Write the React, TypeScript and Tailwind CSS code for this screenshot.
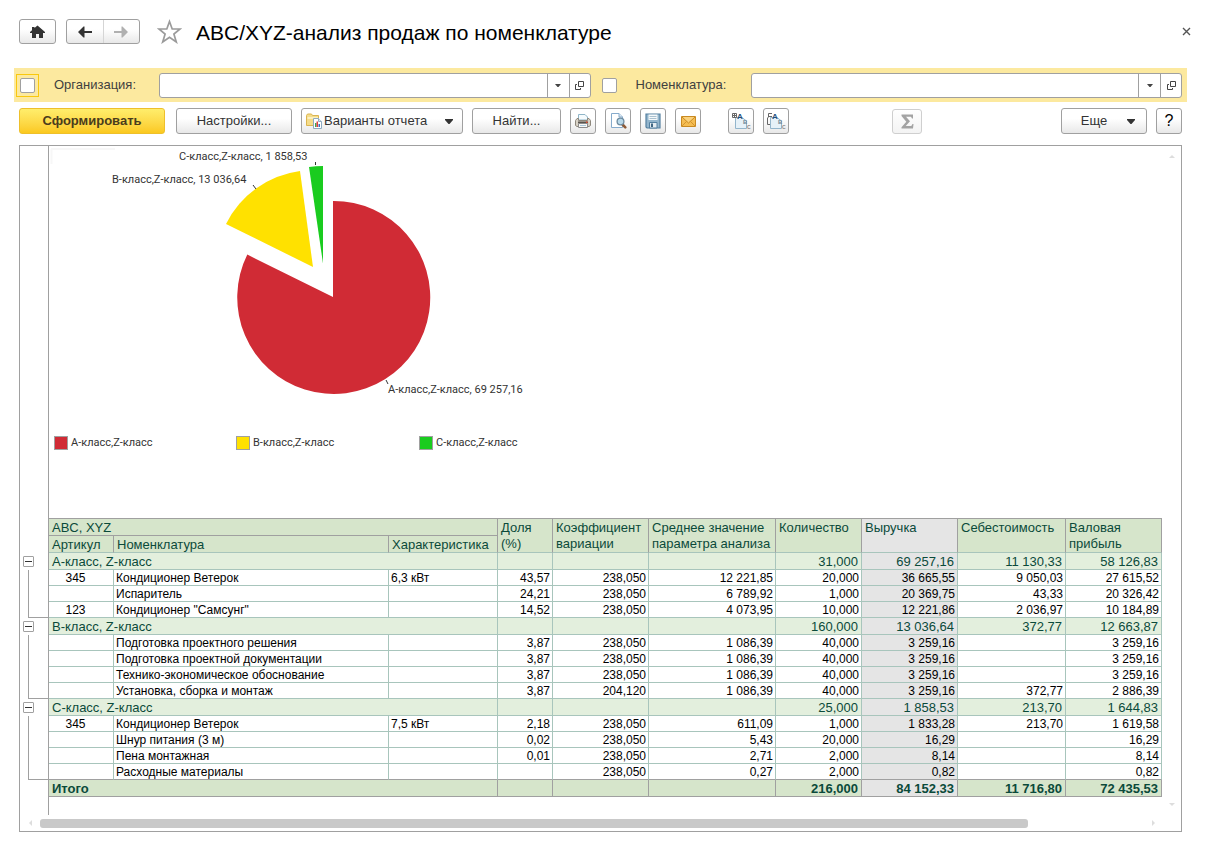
import React, { useState } from 'react';

interface ReportRow {
  article: string;
  name: string;
  feature: string;
  values: string[];
}

interface ReportGroup {
  title: string;
  totals: string[];
  rows: ReportRow[];
}

// values: share, variation, average, quantity, revenue, cost, profit
const GROUPS: ReportGroup[] = [
  {
    title: 'А-класс, Z-класс',
    totals: ['', '', '', '31,000', '69 257,16', '11 130,33', '58 126,83'],
    rows: [
      { article: '345', name: 'Кондиционер Ветерок', feature: '6,3 кВт', values: ['43,57', '238,050', '12 221,85', '20,000', '36 665,55', '9 050,03', '27 615,52'] },
      { article: '', name: 'Испаритель', feature: '', values: ['24,21', '238,050', '6 789,92', '1,000', '20 369,75', '43,33', '20 326,42'] },
      { article: '123', name: 'Кондиционер "Самсунг"', feature: '', values: ['14,52', '238,050', '4 073,95', '10,000', '12 221,86', '2 036,97', '10 184,89'] },
    ],
  },
  {
    title: 'В-класс, Z-класс',
    totals: ['', '', '', '160,000', '13 036,64', '372,77', '12 663,87'],
    rows: [
      { article: '', name: 'Подготовка проектного решения', feature: '', values: ['3,87', '238,050', '1 086,39', '40,000', '3 259,16', '', '3 259,16'] },
      { article: '', name: 'Подготовка проектной документации', feature: '', values: ['3,87', '238,050', '1 086,39', '40,000', '3 259,16', '', '3 259,16'] },
      { article: '', name: 'Технико-экономическое обоснование', feature: '', values: ['3,87', '238,050', '1 086,39', '40,000', '3 259,16', '', '3 259,16'] },
      { article: '', name: 'Установка, сборка и монтаж', feature: '', values: ['3,87', '204,120', '1 086,39', '40,000', '3 259,16', '372,77', '2 886,39'] },
    ],
  },
  {
    title: 'С-класс, Z-класс',
    totals: ['', '', '', '25,000', '1 858,53', '213,70', '1 644,83'],
    rows: [
      { article: '345', name: 'Кондиционер Ветерок', feature: '7,5 кВт', values: ['2,18', '238,050', '611,09', '1,000', '1 833,28', '213,70', '1 619,58'] },
      { article: '', name: 'Шнур питания (3 м)', feature: '', values: ['0,02', '238,050', '5,43', '20,000', '16,29', '', '16,29'] },
      { article: '', name: 'Пена монтажная', feature: '', values: ['0,01', '238,050', '2,71', '2,000', '8,14', '', '8,14'] },
      { article: '', name: 'Расходные материалы', feature: '', values: ['', '238,050', '0,27', '2,000', '0,82', '', '0,82'] },
    ],
  },
];

const GRAND_TOTAL = ['', '', '', '216,000', '84 152,33', '11 716,80', '72 435,53'];
const VALUE_HEADERS = ['Доля (%)', 'Коэффициент вариации', 'Среднее значение параметра анализа', 'Количество', 'Выручка', 'Себестоимость', 'Валовая прибыль'];
const REVENUE = 4;

const FACE = 'flex items-center rounded-[3px] border border-[#a0a0a0] bg-linear-to-b from-white from-40% to-[#e8e8e8] text-[#333333]';
const BTN = `${FACE} justify-center h-[26px]`;

const CaretDown: React.FC = () => (
  <svg width="8" height="5" viewBox="0 0 8 5" aria-hidden="true">
    <path d="M0 0h8v1L4.5 5h-1L0 1z" fill="#333333" />
  </svg>
);

const HomeIcon: React.FC = () => (
  <svg width="15" height="13" viewBox="0 0 15 13" aria-hidden="true">
    <path d="M7.5 0.5L15 7V8H13V13H9V9H6V13H2V8H0V7L2 5.3V2H4.5V3z" fill="#333333" />
  </svg>
);

const ArrowIcon: React.FC<{ right?: boolean; color: string }> = ({ right, color }) => (
  <svg width="14" height="12" viewBox="0 0 14 12" aria-hidden="true">
    <path
      d={right ? 'M14 6L8.5 11.5H7.5V7H0V5H7.5V0.5H8.5z' : 'M0 6L5.5 0.5H6.5V5H14V7H6.5V11.5H5.5z'}
      fill={color}
    />
  </svg>
);

const StarIcon: React.FC = () => (
  <svg width="25" height="25" viewBox="0 0 25 25" aria-hidden="true">
    <path
      d="M12.5 2.5L15.2 10H23L16.9 15L19.3 23L12.5 18.3L5.7 23L8.1 15L2 10H9.8z"
      fill="white"
      stroke="#9b9b9b"
      strokeWidth="1.7"
    />
  </svg>
);

const FolderReportIcon: React.FC = () => (
  <svg width="16" height="16" viewBox="0 0 16 16" aria-hidden="true">
    <path d="M0.5 2.5L1.5 1H5.5L6.5 2.5H12.5V12.5H0.5z" fill="#f5dc8a" stroke="#dbb550" />
    <path d="M1.5 4H12V6H1.5z" fill="#fcf0c0" />
    <path d="M7.5 5.5H12.5L15.5 8.5V15.5H7.5z" fill="white" stroke="#8fabc0" />
    <path d="M12.5 5.5V8.5H15.5" fill="#dce8f0" stroke="#8fabc0" />
    <path d="M9 10H10.5V14H9z" fill="#3aa655" />
    <path d="M10.5 8.5H12V14H10.5z" fill="#e04040" />
    <path d="M12.5 11H14V14H12.5z" fill="#3b6fc4" />
  </svg>
);

const PrinterIcon: React.FC = () => (
  <svg width="16" height="16" viewBox="0 0 16 16" aria-hidden="true">
    <path d="M3.5 1.5H10L12.5 4V7H3.5z" fill="#f6fbfd" stroke="#8fb5c8" />
    <path d="M0.5 7.5L2 5.5H3.5V7.5H12.5V5.5H14L15.5 7.5V12.5L14 13.5H2L0.5 12.5z" fill="#d8d2c6" stroke="#8d877c" />
    <path d="M3 8.5H13V10.5H3z" fill="#5a554e" />
    <path d="M11 8.5H12.5V10H11z" fill="#e2482d" />
    <path d="M3.5 10.5H12.5V14.5H3.5z" fill="#f8f8f6" stroke="#8c8c8c" />
    <path d="M5 12.5H11" stroke="#a9c6da" />
  </svg>
);

const PreviewIcon: React.FC = () => (
  <svg width="17" height="16" viewBox="0 0 17 16" aria-hidden="true">
    <path d="M1.5 0.5H9L12.5 4V14.5H1.5z" fill="white" stroke="#86abcc" />
    <path d="M9 0.5V4H12.5" fill="#dfeaf3" stroke="#86abcc" />
    <path d="M12.5 11.5L15.3 14.3" stroke="#8e5a36" strokeWidth="2.6" strokeLinecap="round" />
    <circle cx="10.5" cy="8.5" r="3.4" fill="#b9d9ea" stroke="#6d8ba0" strokeWidth="1.3" />
  </svg>
);

const DiskIcon: React.FC = () => (
  <svg width="16" height="16" viewBox="0 0 16 16" aria-hidden="true">
    <path d="M1 1H15V15H2L1 14z" fill="#93b5cc" stroke="#5580a0" strokeWidth="1.2" />
    <path d="M3.5 1.5H12.5V7H3.5z" fill="#f4f8fa" />
    <path d="M4.5 3.5H11.5M4.5 5.5H11.5" stroke="#a9c0cf" />
    <path d="M4.5 9.5H12V15H4.5z" fill="#e4ecf1" stroke="#5580a0" />
    <path d="M6 10.5H8V14H6z" fill="#3f6683" />
  </svg>
);

const MailIcon: React.FC = () => (
  <svg width="15" height="11" viewBox="0 0 15 11" aria-hidden="true">
    <path d="M0.5 0.5H14.5V10.5H0.5z" fill="#f5bd52" stroke="#c98a22" />
    <path d="M1 10L5.5 5.5M14 10L9.5 5.5" stroke="#d39530" fill="none" />
    <path d="M1 1L7.5 7L14 1" fill="#fbd27c" stroke="#c98a22" />
  </svg>
);

// Sheet with a group marker, used for expanding and collapsing all groups
const GroupsIcon: React.FC<{ collapse?: boolean }> = ({ collapse }) => (
  <svg width="19" height="18" viewBox="0 0 19 18" aria-hidden="true">
    <path d="M3.5 5.5H10L14.5 9V16.5H3.5z" fill="#e6f1f8" stroke="#93b5cc" />
    {collapse ? (
      <path d="M5 1.5H1.5V5.5M1.5 4.5H5M0.5 5.5V12.5H3" fill="none" stroke="#666666" />
    ) : (
      <path d="M0.5 1.5H4.5V5.5H0.5zM2.5 1.5V6M0 3.5H4.5" fill="none" stroke="#666666" />
    )}
    <text x="5" y="7" fontSize="8" fontWeight="bold" fill="#1f4f7a" fontFamily="Liberation Sans, sans-serif">A</text>
    <text x="11" y="12" fontSize="6" fontWeight="bold" fill="#6f8797" fontFamily="Liberation Sans, sans-serif">B</text>
    <text x="15" y="17" fontSize="5" fontWeight="bold" fill="#888888" fontFamily="Liberation Sans, sans-serif">C</text>
  </svg>
);

const SigmaIcon: React.FC = () => (
  <svg width="13" height="15" viewBox="0 0 13 15" aria-hidden="true">
    <path d="M0.5 0.5H12V4.5H11L10 2.8H5L9 7.2L4.7 12H10.3L11.5 10H12.5L12 14.5H0.5V13.2L5.3 7.8L0.5 2z" fill="#a3a3a3" />
  </svg>
);

const OpenIcon: React.FC = () => (
  <svg width="9" height="9" viewBox="0 0 9 9" aria-hidden="true">
    <path d="M3.5 0.5H8.5V5.5H3.5zM2 3.5H0.5V8.5H5.5V7" fill="none" stroke="#444444" />
  </svg>
);

const FilterField: React.FC<{ id: string; label: string }> = ({ id, label }) => (
  <div className="flex flex-1 h-[25px] rounded-[3px] border border-[#a0a0a0] bg-white overflow-hidden">
    <input id={id} type="text" aria-label={label} className="flex-1 min-w-0 px-2 outline-none" />
    <button type="button" aria-label="Выбрать из списка" className="w-[22px] border-l border-[#a0a0a0] flex items-center justify-center">
      <svg width="6" height="3" viewBox="0 0 6 3" aria-hidden="true">
        <path d="M0 0H6L3.5 3H2.5z" fill="#444444" />
      </svg>
    </button>
    <button type="button" aria-label="Открыть" className="w-[21px] border-l border-[#a0a0a0] flex items-center justify-center">
      <OpenIcon />
    </button>
  </div>
);

const PieChart: React.FC = () => (
  <svg width="500" height="280" viewBox="0 0 500 280" className="block" role="img" aria-label="Выручка по классам">
    <path d="M2 3H66M2.5 3V18" stroke="#f7f7f7" strokeWidth="2" fill="none" />
    <path d="M284 151V55A96.5 96.5 0 1 1 198.3 108.6z" fill="#d02b35" />
    <path d="M264 121L177 78A97 97 0 0 1 251 25z" fill="#ffe100" />
    <path d="M274 117.5L260 21A97 97 0 0 1 274 20z" fill="#1acc1f" />
    <path d="M266.5 16V19M204 39L207 43M337 234L339 238" stroke="#333333" fill="none" />
    <g fontSize="11" fill="#333333" fontFamily="Roboto, sans-serif">
      <text x="130" y="14">С-класс,Z-класс, 1 858,53</text>
      <text x="63" y="37">В-класс,Z-класс, 13 036,64</text>
      <text x="339" y="247">А-класс,Z-класс, 69 257,16</text>
    </g>
  </svg>
);

const App: React.FC = () => {
  const [useOrg, setUseOrg] = useState(false);
  const [useItem, setUseItem] = useState(false);

  const valueCells = (values: string[], cls: string) =>
    values.map((v, i) => (
      <td key={i} className={`border-r border-b pt-[2px] text-right whitespace-nowrap ${cls} ${i === REVENUE ? 'bg-[#e5e5e5]' : ''}`}>
        {v}
      </td>
    ));

  return (
    <div className="min-h-screen bg-white font-['Liberation_Sans',Arial,sans-serif] text-[13px] text-[#404040] pl-[14px] pr-[21px] pt-[19px] pb-[14px]">
      {/* Title bar */}
      <header className="flex items-center h-[25px] pl-[5px] mb-6">
        <button type="button" aria-label="Главная" className={`${FACE} justify-center w-[37px] h-[25px]`}>
          <HomeIcon />
        </button>
        <div className={`${FACE} ml-[10px] w-[74px] h-[25px]`}>
          <button type="button" aria-label="Назад" className="flex-1 h-full flex items-center justify-center">
            <ArrowIcon color="#333333" />
          </button>
          <button type="button" aria-label="Вперед" className="flex-1 h-full flex items-center justify-center border-l border-[#d5d5d5]">
            <ArrowIcon right color="#b0b0b0" />
          </button>
        </div>
        <button type="button" aria-label="Добавить в избранное" className="ml-[17px]">
          <StarIcon />
        </button>
        <h1 className="ml-[14px] pt-[2px] text-[21px] leading-6 text-black whitespace-nowrap">ABC/XYZ-анализ продаж по номенклатуре</h1>
        <button type="button" aria-label="Закрыть" className="ml-auto -mr-1">
          <svg width="9" height="9" viewBox="0 0 9 9" aria-hidden="true">
            <path d="M1 1L8 8M8 1L1 8" stroke="#555555" strokeWidth="1.4" />
          </svg>
        </button>
      </header>

      {/* Filters */}
      <div className="flex items-center h-[34px] bg-[#fce99f] pl-[2px] pr-[5px]">
        <span className="flex items-center justify-center size-[23px] border border-[#f9c80e]">
          <input
            id="use-org"
            type="checkbox"
            checked={useOrg}
            onChange={(e) => setUseOrg(e.target.checked)}
            className="appearance-none size-[15px] rounded-[2px] border border-[#a0a0a0] bg-white checked:bg-[#a0a0a0]"
          />
        </span>
        <label htmlFor="use-org" className="ml-[15px] w-[105px]">Организация:</label>
        <FilterField id="org" label="Организация" />
        <input
          id="use-item"
          type="checkbox"
          checked={useItem}
          onChange={(e) => setUseItem(e.target.checked)}
          className="appearance-none ml-[11px] size-[15px] rounded-[2px] border border-[#a0a0a0] bg-white checked:bg-[#a0a0a0]"
        />
        <label htmlFor="use-item" className="ml-[19px] w-[115px]">Номенклатура:</label>
        <FilterField id="item" label="Номенклатура" />
      </div>

      {/* Toolbar */}
      <div className="flex items-center gap-[9px] mt-[6px] mb-[11px] px-[5px]">
        <button
          type="button"
          className="h-[26px] w-[146px] mr-[2px] rounded-[3px] border border-[#eec02b] bg-linear-to-b from-[#ffee6b] to-[#fbc91d] font-bold text-[#4a3c1c]"
        >
          Сформировать
        </button>
        <button type="button" className={`${BTN} w-[116px]`}>Настройки...</button>
        <button type="button" className={`${BTN} w-[162px] pl-1 pr-[9px] gap-[2px]`}>
          <FolderReportIcon />
          <span className="mr-auto whitespace-nowrap">Варианты отчета</span>
          <CaretDown />
        </button>
        <button type="button" className={`${BTN} w-[89px]`}>Найти...</button>
        <button type="button" aria-label="Печать" className={`${BTN} w-[26px]`}><PrinterIcon /></button>
        <button type="button" aria-label="Предварительный просмотр" className={`${BTN} w-[26px]`}><PreviewIcon /></button>
        <button type="button" aria-label="Сохранить" className={`${BTN} w-[26px]`}><DiskIcon /></button>
        <button type="button" aria-label="Отправить" className={`${BTN} w-[26px]`}><MailIcon /></button>
        <button type="button" aria-label="Развернуть группы" className={`${BTN} w-[26px] ml-[18px]`}><GroupsIcon /></button>
        <button type="button" aria-label="Свернуть группы" className={`${BTN} w-[26px]`}><GroupsIcon collapse /></button>
        <button
          type="button"
          disabled
          aria-label="Сумма"
          className="flex items-center justify-center w-[30px] h-[25px] ml-[94px] rounded-[3px] border border-[#cfcfcf] bg-linear-to-b from-white to-[#f3f3f3]"
        >
          <SigmaIcon />
        </button>
        <button type="button" className={`${BTN} w-[86px] ml-auto gap-5 pl-2`}>
          Еще
          <CaretDown />
        </button>
        <button type="button" aria-label="Справка" className={`${BTN} w-[26px] text-base text-black`}>?</button>
      </div>

      {/* Report */}
      <main className="mx-[5px] border border-[#a0a0a0]">
        <div className="flex">
          {/* Group outline */}
          <div className="w-7 shrink-0 pt-[407px]">
            {GROUPS.map((group) => (
              <div key={group.title}>
                <div className="flex items-center h-[17px] pl-[3px]">
                  <button type="button" aria-label={`Свернуть ${group.title}`} className="flex items-center justify-center size-[11px] rounded-[1px] border border-[#a0a0a0]">
                    <span className="w-[7px] h-px bg-[#333333]" />
                  </button>
                </div>
                <div className="ml-2 border-l border-b border-[#a0a0a0]">
                  {group.rows.map((row) => (
                    <div key={row.name} className="h-4 last:h-[15px]" />
                  ))}
                </div>
              </div>
            ))}
          </div>

          <div className="flex-1 min-w-0 border-l border-[#a0a0a0] pb-[18px]">
            <PieChart />
            <ul className="flex pt-[10px] pb-[68px] pl-[5px] font-[Roboto,sans-serif] text-[11px] leading-[14px] text-[#333333]">
              <li className="flex items-center gap-[3px] w-[182px]">
                <span className="size-[14px] border border-[#a0a0a0] bg-[#d02b35]" />А-класс,Z-класс
              </li>
              <li className="flex items-center gap-[3px] w-[183px]">
                <span className="size-[14px] border border-[#a0a0a0] bg-[#ffe100]" />В-класс,Z-класс
              </li>
              <li className="flex items-center gap-[3px]">
                <span className="size-[14px] border border-[#a0a0a0] bg-[#1acc1f]" />С-класс,Z-класс
              </li>
            </ul>

            <table className="w-full table-fixed border-separate border-spacing-0 text-xs leading-[13px] text-black">
              <colgroup>
                <col className="w-[65px]" />
                <col className="w-[275px]" />
                <col className="w-[109px]" />
                <col className="w-[55px]" />
                <col className="w-[96px]" />
                <col className="w-[127px]" />
                <col className="w-[86px]" />
                <col className="w-[96px]" />
                <col className="w-[108px]" />
                <col className="w-[96px]" />
              </colgroup>
              <thead className="bg-[#d6e5cb] text-left text-[13px] leading-[14px] text-[#0b4a3a]">
                <tr>
                  <th colSpan={3} className="h-[18px] border-t border-r border-b border-[#a0a0a0] pt-[2px] pl-[3px] font-normal">ABC, XYZ</th>
                  {VALUE_HEADERS.map((title, i) => (
                    <th
                      key={title}
                      rowSpan={2}
                      className={`border-t border-r border-b border-t-[#a0a0a0] border-r-[#a0a0a0] border-b-[#a8c5bc] pt-px pl-[3px] align-top font-normal leading-4 ${i === REVENUE ? 'bg-[#e5e5e5]' : ''}`}
                    >
                      {title}
                    </th>
                  ))}
                </tr>
                <tr>
                  {['Артикул', 'Номенклатура', 'Характеристика'].map((title) => (
                    <th key={title} className="h-[17px] border-r border-b border-r-[#a0a0a0] border-b-[#a8c5bc] pt-[2px] pl-[3px] font-normal">{title}</th>
                  ))}
                </tr>
              </thead>
              <tbody>
                {GROUPS.map((group, g) => (
                  <React.Fragment key={group.title}>
                    <tr className="bg-[#e3efdd] text-[13px] leading-[14px] text-[#0b4a3a]">
                      <td colSpan={3} className="h-[17px] border-r border-b border-[#a8c5bc] pt-[2px] pl-[3px]">{group.title}</td>
                      {valueCells(group.totals, 'border-[#a8c5bc] pr-[3px]')}
                    </tr>
                    {group.rows.map((row, r) => {
                      const last = g === GROUPS.length - 1 && r === group.rows.length - 1;
                      const line = last ? 'border-r-[#a8c5bc] border-b-[#a0a0a0]' : 'border-[#a8c5bc]';
                      return (
                        <tr key={row.name}>
                          <td className={`h-4 border-r border-b ${line} pt-[2px] pr-[11px] text-center`}>{row.article}</td>
                          <td className={`border-r border-b ${line} pt-[2px] pl-[2px] whitespace-nowrap`}>{row.name}</td>
                          <td className={`border-r border-b ${line} pt-[2px] pl-[2px]`}>{row.feature}</td>
                          {valueCells(row.values, `${line} pr-[2px]`)}
                        </tr>
                      );
                    })}
                  </React.Fragment>
                ))}
              </tbody>
              <tfoot>
                <tr className="bg-[#d6e5cb] text-[13px] leading-[14px] font-bold text-[#0b4a3a]">
                  <td colSpan={3} className="h-[17px] border-r border-b border-[#a0a0a0] pt-[2px] pl-[3px]">Итого</td>
                  {valueCells(GRAND_TOTAL, 'border-[#a0a0a0] pr-[3px]')}
                </tr>
              </tfoot>
            </table>
          </div>

          <div className="flex flex-col items-center justify-between w-[19px] shrink-0 py-[9px]">
            <svg width="6" height="3" viewBox="0 0 6 3" aria-hidden="true"><path d="M0 3L3 0L6 3z" fill="#dddddd" /></svg>
            <svg width="6" height="3" viewBox="0 0 6 3" aria-hidden="true"><path d="M0 0L3 3L6 0z" fill="#dddddd" /></svg>
          </div>
        </div>

        {/* Horizontal scroll */}
        <div className="flex items-center h-4 pl-[9px] pr-[26px]">
          <svg width="3" height="6" viewBox="0 0 3 6" aria-hidden="true"><path d="M3 0L0 3L3 6z" fill="#dddddd" /></svg>
          <div className="flex-1 ml-2 mr-[2px]">
            <div className="w-[89%] h-[9px] rounded-[3px] bg-[#c9c9c9]" />
          </div>
          <svg width="3" height="6" viewBox="0 0 3 6" aria-hidden="true"><path d="M0 0L3 3L0 6z" fill="#dddddd" /></svg>
        </div>
      </main>
    </div>
  );
};

export default App;
